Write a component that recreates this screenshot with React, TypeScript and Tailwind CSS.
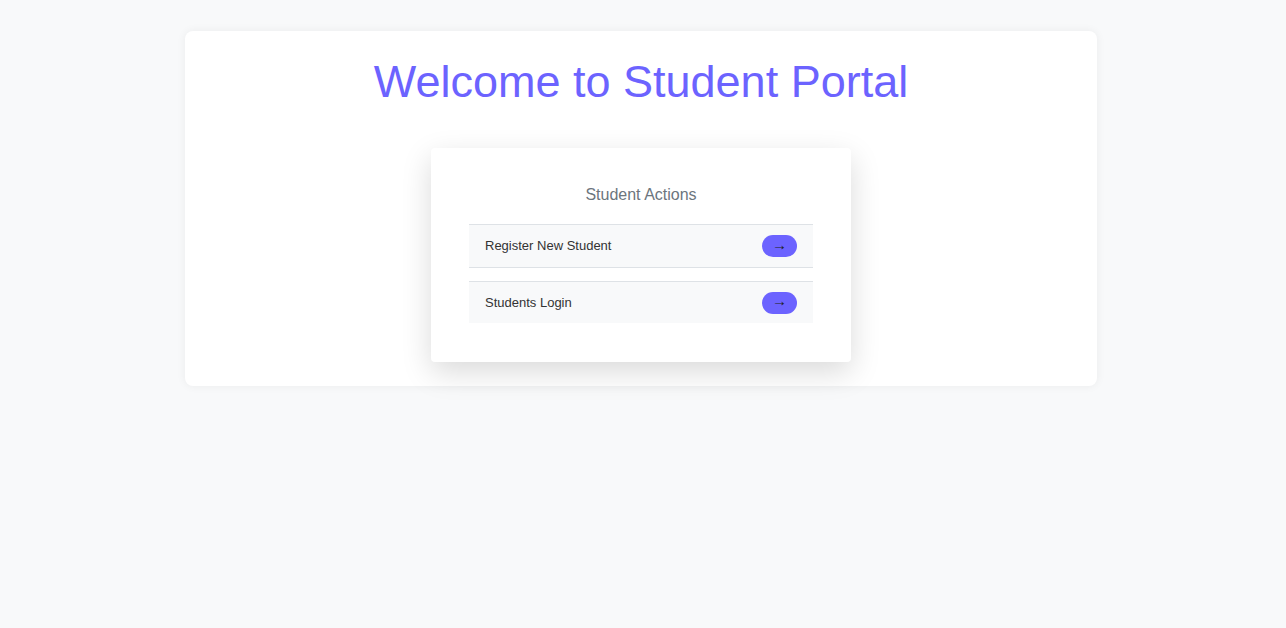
export default function App() {
  const actions = ['Register New Student', 'Students Login'];

  return (
    <div className="min-h-screen bg-[#f8f9fa] pt-[31px] pr-1 font-['Liberation_Sans',Arial,sans-serif]">
      <div className="mx-auto w-[912px] rounded-lg bg-white pt-[28px] pb-6 shadow-[0_0_10px_rgba(0,0,0,0.06)]">
        <h1 className="text-center text-[45px] leading-[45px] text-[#6c63ff]">Welcome to Student Portal</h1>

        <div className="mx-auto mt-[44px] w-[420px] rounded bg-white px-[38px] pt-[37px] pb-[39px] shadow-[0_10px_30px_rgba(0,0,0,0.15)]">
          <h2 className="text-center text-base leading-5 text-[#6c757d]">Student Actions</h2>

          <ul className="mt-[19px]">
            {actions.map((label, i) => (
              <li
                key={label}
                className={`flex items-center justify-between border-t border-[#dee2e6] bg-[#f8f9fa] px-4 ${i === 0 ? 'mb-[13px] h-[44px] border-b' : 'h-[42px]'}`}
              >
                <span className="text-[13px] text-[#333]">{label}</span>
                <button className="flex h-[22px] w-[35px] items-center justify-center rounded-full bg-[#6c63ff] text-[15px] leading-none text-[#222]">
                  <span className="-translate-y-[2px]">→</span>
                </button>
              </li>
            ))}
          </ul>
        </div>
      </div>
    </div>
  );
}
